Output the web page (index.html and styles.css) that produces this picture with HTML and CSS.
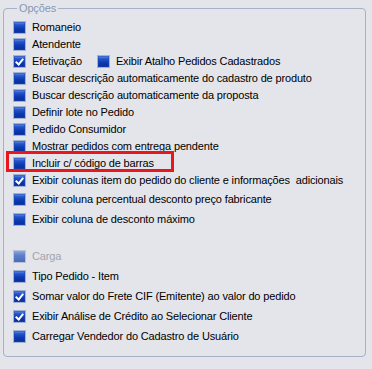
FILE: index.html
```html
<!DOCTYPE html>
<html>
<head>
<meta charset="utf-8">
<link rel="stylesheet" href="styles.css">
</head>
<body>
<div class="page">
  <fieldset class="group">
    <legend class="group-title">Opções</legend>
    <div class="list">
      <div class="row"><span class="cb"></span><span class="lbl">Romaneio</span></div>
      <div class="row"><span class="cb"></span><span class="lbl">Atendente</span></div>
      <div class="row">
        <span class="cb checked"></span><span class="lbl">Efetivação</span>
        <span class="cb cb-second"></span><span class="lbl">Exibir Atalho Pedidos Cadastrados</span>
      </div>
      <div class="row"><span class="cb"></span><span class="lbl">Buscar descrição automaticamente do cadastro de produto</span></div>
      <div class="row"><span class="cb"></span><span class="lbl">Buscar descrição automaticamente da proposta</span></div>
      <div class="row"><span class="cb"></span><span class="lbl">Definir lote no Pedido</span></div>
      <div class="row"><span class="cb"></span><span class="lbl">Pedido Consumidor</span></div>
      <div class="row"><span class="cb"></span><span class="lbl">Mostrar pedidos com entrega pendente</span></div>
      <div class="row"><span class="mark"><span class="cb"></span><span class="lbl">Incluir c/ código de barras</span></span></div>
      <div class="row"><span class="cb checked"></span><span class="lbl">Exibir colunas item do pedido do cliente e informações &nbsp;adicionais</span></div>
      <div class="row row-gap2"><span class="cb"></span><span class="lbl">Exibir coluna percentual desconto preço fabricante</span></div>
      <div class="row row-gap3"><span class="cb"></span><span class="lbl">Exibir coluna de desconto máximo</span></div>
      <div class="row row-section disabled"><span class="cb"></span><span class="lbl">Carga</span></div>
      <div class="row row-gap3"><span class="cb"></span><span class="lbl">Tipo Pedido - Item</span></div>
      <div class="row row-gap3"><span class="cb checked"></span><span class="lbl">Somar valor do Frete CIF (Emitente) ao valor do pedido</span></div>
      <div class="row row-gap3"><span class="cb checked"></span><span class="lbl">Exibir Análise de Crédito ao Selecionar Cliente</span></div>
      <div class="row row-gap3"><span class="cb"></span><span class="lbl">Carregar Vendedor do Cadastro de Usuário</span></div>
    </div>
  </fieldset>
</div>
</body>
</html>
```
FILE: styles.css
```css
html, body {
  margin: 0;
  padding: 0;
  background: #e4e5eb;
}
body {
  width: 372px;
  height: 369px;
  overflow: hidden;
  font-family: "Liberation Sans", Arial, sans-serif;
  font-size: 11px;
  letter-spacing: -0.15px;
  color: #000;
}
.page {
  padding: 2px 6px 0 3px;
}
.group {
  margin: 0;
  padding: 4px 0 0 9px;
  height: 349px;
  border: 1px solid #a7b0c9;
  border-radius: 4px;
  min-width: 0;
}
.group-title {
  margin-left: 4px;
  padding: 0 2px;
  line-height: 13px;
  height: 13px;
  color: #8797b2;
  font-size: 11px;
}
.list {
  display: flex;
  flex-direction: column;
}
.row {
  display: flex;
  align-items: center;
  height: 17px;
  white-space: nowrap;
}
.row-gap2 { margin-top: 2px; }
.row-gap3 { margin-top: 3px; }
.row-section { margin-top: 20px; }
.cb {
  flex: none;
  box-sizing: border-box;
  width: 13px;
  height: 13px;
  border: 1px solid #9fb2d6;
  background:
    linear-gradient(180deg, #6c95e6 0%, #2356cc 25%, #0d39b2 60%, #0a2d96 100%);
  box-shadow: inset 0 0 0 1px rgba(30, 70, 180, 0.5);
  position: relative;
}
.cb.checked::after {
  content: "";
  position: absolute;
  left: 3px;
  top: 1px;
  width: 3px;
  height: 6px;
  border: solid #fff;
  border-width: 0 2px 2px 0;
  transform: rotate(40deg);
}
.lbl {
  margin-left: 6px;
  line-height: 13px;
}
.cb-second {
  margin-left: 15px;
}
.disabled .cb {
  border-color: #b7c3dc;
  background: linear-gradient(180deg, #8aa6dc 0%, #5e80c8 40%, #4a6cb8 100%);
  box-shadow: none;
}
.disabled .lbl {
  color: #a2a4aa;
}
.mark {
  display: flex;
  align-items: center;
  position: relative;
}
.mark::after {
  content: "";
  position: absolute;
  left: -7px;
  top: -6px;
  width: 168px;
  height: 21px;
  box-sizing: border-box;
  border: 3px solid #e8161d;
}
```
